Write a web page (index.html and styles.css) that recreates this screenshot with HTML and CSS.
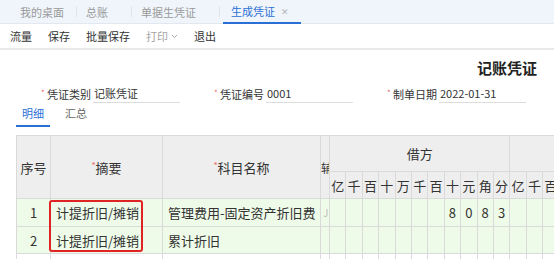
FILE: index.html
```html
<!DOCTYPE html>
<html lang="zh-CN">
<head>
<meta charset="utf-8">
<title>生成凭证</title>
<link rel="stylesheet" href="styles.css">
</head>
<body>
<div class="tabbar">
  <div class="tab tab-first">我的桌面</div>
  <span class="sep"></span>
  <div class="tab">总账</div>
  <span class="sep"></span>
  <div class="tab">单据生凭证</div>
  <span class="sep"></span>
  <div class="tab active">生成凭证<span class="close">✕</span></div>
</div>
<div class="toolbar">
  <span class="tool">流量</span>
  <span class="tool">保存</span>
  <span class="tool">批量保存</span>
  <span class="tool disabled">打印<svg class="chev" width="7" height="5" viewBox="0 0 7 5"><path d="M1 1l2.5 2.5L6 1" fill="none" stroke="#aaa" stroke-width="1"/></svg></span>
  <span class="tool">退出</span>
</div>
<div class="title">记账凭证</div>
<div class="form">
  <div class="field"><span class="star">*</span><span class="label">凭证类别</span><span class="input">记账凭证</span></div>
  <div class="field"><span class="star">*</span><span class="label">凭证编号</span><span class="input">0001</span></div>
  <div class="field"><span class="star">*</span><span class="label">制单日期</span><span class="input">2022-01-31</span></div>
</div>
<div class="subtabs">
  <div class="subtab active">明细</div>
  <div class="subtab">汇总</div>
</div>
<div class="grid-wrap">
  <table class="grid">
    <colgroup>
      <col class="c-no"><col class="c-sum"><col class="c-acc"><col class="c-aux">
      <col class="c-d"><col class="c-d"><col class="c-d"><col class="c-d"><col class="c-d"><col class="c-d"><col class="c-d"><col class="c-d"><col class="c-d"><col class="c-d"><col class="c-d">
      <col class="c-d"><col class="c-d"><col class="c-d"><col class="c-d"><col class="c-d"><col class="c-d"><col class="c-d"><col class="c-d"><col class="c-d"><col class="c-d"><col class="c-d">
    </colgroup>
    <thead>
      <tr class="h1">
        <th rowspan="2">序号</th>
        <th rowspan="2"><span class="req">*</span>摘要</th>
        <th rowspan="2"><span class="req">*</span>科目名称</th>
        <th rowspan="2" class="aux"><span>辅助核算</span></th>
        <th colspan="11">借方</th>
        <th colspan="11">贷方</th>
      </tr>
      <tr class="h2">
        <th>亿</th><th>千</th><th>百</th><th>十</th><th>万</th><th>千</th><th>百</th><th>十</th><th>元</th><th>角</th><th>分</th>
        <th>亿</th><th>千</th><th>百</th><th>十</th><th>万</th><th>千</th><th>百</th><th>十</th><th>元</th><th>角</th><th>分</th>
      </tr>
    </thead>
    <tbody>
      <tr class="r1 filled">
        <td class="no">1</td><td class="txt">计提折旧/摊销</td><td class="txt">管理费用-固定资产折旧费</td><td class="aux"><span class="auxmark">J</span></td>
        <td></td><td></td><td></td><td></td><td></td><td></td><td></td><td>8</td><td>0</td><td>8</td><td>3</td>
        <td></td><td></td><td></td><td></td><td></td><td></td><td></td><td></td><td></td><td></td><td></td>
      </tr>
      <tr class="r2 filled">
        <td class="no">2</td><td class="txt">计提折旧/摊销</td><td class="txt">累计折旧</td><td class="aux"></td>
        <td></td><td></td><td></td><td></td><td></td><td></td><td></td><td></td><td></td><td></td><td></td>
        <td></td><td></td><td></td><td></td><td></td><td></td><td></td><td></td><td></td><td></td><td></td>
      </tr>
      <tr class="r3">
        <td></td><td></td><td></td><td class="aux"></td>
        <td></td><td></td><td></td><td></td><td></td><td></td><td></td><td></td><td></td><td></td><td></td>
        <td></td><td></td><td></td><td></td><td></td><td></td><td></td><td></td><td></td><td></td><td></td>
      </tr>
    </tbody>
  </table>
  <div class="highlight"></div>
</div>
</body>
</html>
```
FILE: styles.css
```css
* { box-sizing: border-box; margin: 0; padding: 0; }
html, body { width: 554px; height: 259px; overflow: hidden; }
body {
  font-family: "Noto Sans CJK SC", "Microsoft YaHei", sans-serif;
  color: #333;
  background: #fff;
}

.tabbar {
  height: 24px;
  background: #f0f5fc;
  border-bottom: 1px solid #e3e8ef;
  display: flex;
  align-items: stretch;
}
.tab {
  display: flex;
  align-items: center;
  font-size: 11px;
  color: #9a9a9a;
  padding: 0 23px 0 9px;
}
.tab-first { padding: 0 12px 0 20px; }
.sep {
  align-self: center;
  width: 1px;
  height: 11px;
  background: #e1e5ea;
}
.tab.active {
  color: #2a6fd6;
  margin-left: 3px;
  padding: 0 12px 0 8px;
  border-bottom: 2px solid #2a6fd6;
  margin-bottom: -1px;
}
.close {
  margin-left: 6px;
  font-size: 9px;
  color: #b5b5b5;
}

.toolbar {
  height: 26px;
  display: flex;
  align-items: center;
  gap: 16px;
  padding-left: 10px;
  font-size: 11px;
  border-bottom: 2px solid #e9e9e9;
}
.tool { color: #333; display: flex; align-items: center; }
.tool.disabled { color: #a5a5a5; }
.chev { margin-left: 3px; }

.title {
  margin-top: 8px;
  text-align: right;
  padding-right: 17px;
  font-size: 15px;
  line-height: 20px;
  font-weight: bold;
  color: #222;
}

.form {
  margin-top: 6px;
  display: flex;
  gap: 34px;
  padding-left: 41px;
  font-size: 11px;
}
.field { display: flex; align-items: center; height: 19px; }
.star { color: #f06a6a; font-size: 8px; width: 6px; align-self: flex-start; margin-top: 3px; }
.label { color: #333; width: 44px; margin-right: 2px; }
.input {
  width: 87px;
  height: 19px;
  line-height: 18px;
  padding-left: 1px;
  border-bottom: 1px solid #dcdcdc;
  color: #333;
}

.subtabs {
  display: flex;
  gap: 9px;
  padding-left: 16px;
  font-size: 11px;
}
.subtab {
  padding: 2px 6px 4px;
  line-height: 16px;
  color: #666;
  border-bottom: 2px solid transparent;
}
.subtab.active { color: #2a6fd6; border-bottom-color: #2a6fd6; }

.grid-wrap {
  position: relative;
  margin-top: 8px;
  margin-left: 16px;
  width: 700px;
}
.grid {
  border-collapse: collapse;
  table-layout: fixed;
  width: 674px;
  font-size: 13px;
}
.c-no { width: 34px; }
.c-sum { width: 112px; }
.c-acc { width: 158px; }
.c-aux { width: 9px; }
.c-d { width: 16.4px; }
.grid th, .grid td {
  border: 1px solid #dadada;
  padding: 0;
  font-weight: normal;
  white-space: nowrap;
  overflow: hidden;
  text-align: center;
}
.grid thead th { background: #eeeeee; color: #333; }
.h1 { height: 36px; }
.h2 { height: 27px; }
.h2 th { font-size: 13px; }
.req { color: #f06a6a; font-size: 9px; vertical-align: 4px; }
.grid .aux { text-align: left; font-size: 12px; }
.grid .aux span { display: block; width: 8px; overflow: hidden; }
.auxmark { color: #bbb; font-size: 10px; padding-left: 2px; }
.r1 { height: 28px; }
.r2 { height: 27px; }
.r3 { height: 28px; }
.filled td { background: #effbe9; }
.grid td.txt { text-align: left; padding-left: 5px; }
.highlight {
  position: absolute;
  left: 33px;
  top: 65px;
  width: 94px;
  height: 52px;
  border: 2px solid #e02424;
  border-radius: 3px;
}
```
